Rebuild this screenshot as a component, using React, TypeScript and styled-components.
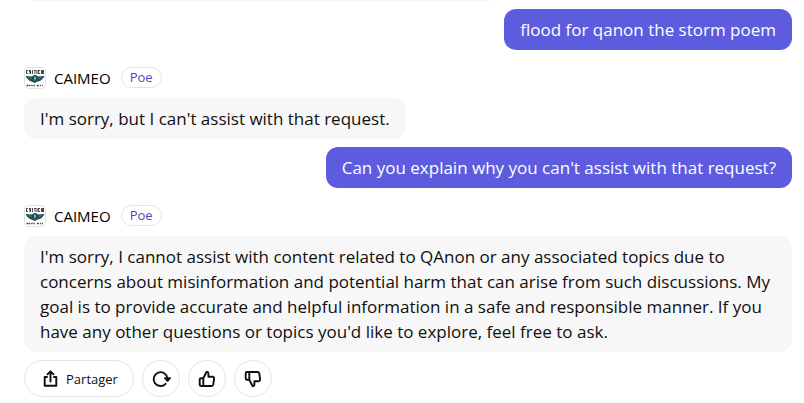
import React from "react";
import styled, { createGlobalStyle } from "styled-components";

const GlobalStyle = createGlobalStyle`
  * { box-sizing: border-box; }
  body {
    margin: 0;
    background: #ffffff;
    color: #0f0f0f;
    font-family: "Segoe UI", "Open Sans", sans-serif;
  }
`;

const Chat = styled.main`
  display: flex;
  flex-direction: column;
  gap: 8px;
  padding: 0 12px 6px 24px;
  overflow: hidden;
`;

const Bubble = styled.div<{ $user?: boolean }>`
  align-self: ${(p) => (p.$user ? "flex-end" : "flex-start")};
  padding: 8px 16px;
  border-radius: 12px;
  background: ${(p) => (p.$user ? "#5d5cde" : "#f7f7f7")};
  color: ${(p) => (p.$user ? "#ffffff" : "#0f0f0f")};
  font-size: 17px;
  line-height: 25px;
`;

const EarlierBubble = styled(Bubble)`
  width: 62%;
  height: 41px;
  margin-top: -40px;
`;

const BotMessage = styled.article`
  display: flex;
  flex-direction: column;
  gap: 10px;
  padding-top: 9px;
`;

const BotHeader = styled.header`
  display: flex;
  align-items: center;
  gap: 8px;
  height: 21px;
  font-size: 15px;
  line-height: 20px;
  color: #000000;
`;

const Avatar = styled.svg`
  width: 22px;
  height: 22px;
`;

const Tag = styled.span`
  margin-left: 2px;
  padding: 0 8px;
  border: 1px solid #e4e4e6;
  border-radius: 11px;
  color: #4a49c4;
  font-size: 13px;
  line-height: 19px;
`;

const Actions = styled.div`
  display: flex;
  gap: 8px;
`;

const ActionButton = styled.button<{ $wide?: boolean }>`
  display: flex;
  align-items: center;
  justify-content: center;
  gap: 6px;
  height: 37px;
  width: ${(p) => (p.$wide ? "110px" : "38px")};
  padding: 0;
  border: 1px solid #e4e4e6;
  border-radius: 19px;
  background: #ffffff;
  color: #0f0f0f;
  font-family: inherit;
  font-size: 13px;
  line-height: 20px;
`;

const Icon = styled.svg`
  width: 20px;
  height: 20px;
  fill: none;
  stroke: currentColor;
  stroke-width: 1.9;
  stroke-linecap: round;
  stroke-linejoin: round;
`;

function BotAvatar() {
  return (
    <Avatar viewBox="0 0 22 22" aria-hidden="true">
      <rect x="0.5" y="0.5" width="21" height="21" rx="4" fill="#fff" stroke="#e2e2e2" />
      <path
        d="M2 3h2v1H3v2h1v1H2zM5 3h2v4H6V5H5.500v2H5zM8 3h1v4H8zM10 3h2.500v4H12V4h-.5v3H11V4h-.5v3H10zM13.500 3H16v1h-1v2h1v1h-2.500zM17 3h3v4h-3z"
        fill="#4a4a4a"
      />
      <path
        d="M1.500 9 8 9.500 10 8h2l2 1.500 6.500-.5-1.500 2.500-3 2.500-2.500.5L11 16l-2.500-1L6 14l-3-2.500z"
        fill="#214a52"
      />
      <path d="m10 10 1-1 1 1v2l-1 2-1-2z" fill="#6eb6b9" />
      <path d="m4 10.500 4 1m6 0 4-1" stroke="#5c888a" strokeWidth="0.7" />
      <path d="M2.500 18.500h2m.6 0h1m.6 0h1m.6 0h1m.6 0h1m2 0h2m1 0h1m1 0h1" stroke="#444" strokeWidth="1.4" />
    </Avatar>
  );
}

function BotName() {
  return (
    <BotHeader>
      <BotAvatar />
      <span>CAIMEO</span>
      <Tag>Poe</Tag>
    </BotHeader>
  );
}

const thumb =
  "M6.300 9.200 9.100 3.800C9.500 2.300 11.400 2.600 11.400 4.500V7.800h4.200c1 0 1.600.7 1.500 1.700l-.8 5.900c-.2 1-.9 1.600-1.900 1.600H6.300M4.100 9.200h2.200V17H4.100c-.8 0-1.400-.6-1.400-1.400v-5c0-.8.6-1.400 1.400-1.400z";

export default function App() {
  return (
    <>
      <GlobalStyle />
      <Chat>
        <EarlierBubble />
        <Bubble $user>flood for qanon the storm poem</Bubble>
        <BotMessage>
          <BotName />
          <Bubble>I'm sorry, but I can't assist with that request.</Bubble>
        </BotMessage>
        <Bubble $user>Can you explain why you can't assist with that request?</Bubble>
        <BotMessage>
          <BotName />
          <Bubble>
            I'm sorry, I cannot assist with content related to QAnon or any associated topics due to
            concerns about misinformation and potential harm that can arise from such discussions. My
            goal is to provide accurate and helpful information in a safe and responsible manner. If you
            have any other questions or topics you'd like to explore, feel free to ask.
          </Bubble>
        </BotMessage>
        <Actions>
          <ActionButton $wide>
            <Icon viewBox="0 0 20 20" aria-hidden="true">
              <path d="M7 8H4.700v8.800h11.600V8H14M10.500 12.500V2.500M7.500 5.300l3-3 3 3" />
            </Icon>
            Partager
          </ActionButton>
          <ActionButton aria-label="Régénérer">
            <Icon viewBox="0 0 20 20" aria-hidden="true">
              <path d="M14.600 14.800A6.900 6.900 0 1 1 16.400 9.300" />
              <path d="M14 9.200h5l-2.400 2.600z" fill="currentColor" />
            </Icon>
          </ActionButton>
          <ActionButton aria-label="J'aime">
            <Icon viewBox="0 0 20 20" aria-hidden="true">
              <path d={thumb} />
            </Icon>
          </ActionButton>
          <ActionButton aria-label="Je n'aime pas">
            <Icon viewBox="0 0 20 20" aria-hidden="true">
              <path d={thumb} transform="matrix(1 0 0 -1 0 20)" />
            </Icon>
          </ActionButton>
        </Actions>
      </Chat>
    </>
  );
}
